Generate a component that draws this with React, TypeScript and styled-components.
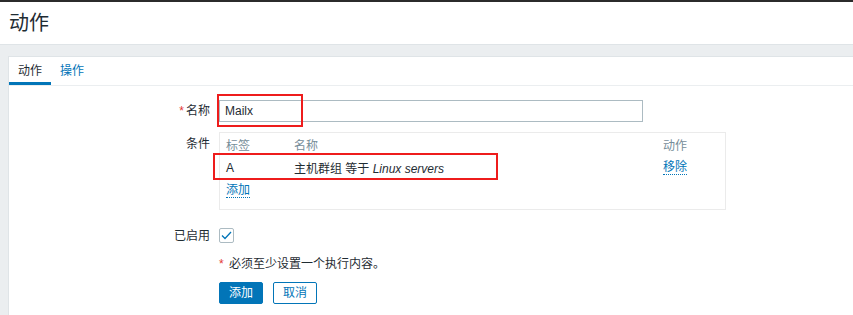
import React from 'react';
import styled, { createGlobalStyle } from 'styled-components';

const GlobalStyle = createGlobalStyle`
  html, body {
    margin: 0;
    padding: 0;
    background: #ebeef0;
  }
  body {
    font-family: "Liberation Sans", Arial, "Noto Sans CJK SC", sans-serif;
    font-size: 12px;
    color: #1f2c33;
  }
`;

const TopStrip = styled.div`
  height: 2px;
  background: #2b2b2b;
`;

const Header = styled.header`
  height: 42px;
  background: #ffffff;
  border-bottom: 1px solid #dfe4e7;
  display: flex;
  align-items: center;
  padding-left: 9px;
`;

const Title = styled.h1`
  margin: 0;
  font-size: 20px;
  font-weight: normal;
  line-height: 24px;
  color: #1f2c33;
`;

const Main = styled.main`
  padding: 11px 0 0 8px;
  height: calc(100vh - 45px);
  box-sizing: border-box;
`;

const Panel = styled.section`
  background: #ffffff;
  border-left: 1px solid #dfe4e7;
  border-top: 1px solid #dfe4e7;
  height: 100%;
`;

const TabBar = styled.nav`
  display: flex;
  border-bottom: 1px solid #ebeef0;
`;

const Tab = styled.div<{ $active?: boolean }>`
  height: 28px;
  box-sizing: border-box;
  padding: 7px 9px 4px;
  line-height: 14px;
  color: ${p => (p.$active ? '#1f2c33' : '#0275b8')};
  border-bottom: 3px solid ${p => (p.$active ? '#0275b8' : 'transparent')};
`;

const Form = styled.div`
  display: grid;
  grid-template-columns: 201px 1fr;
  column-gap: 9px;
  padding: 14px 0 0 0;
`;

const Label = styled.div<{ $top?: number }>`
  text-align: right;
  line-height: 14px;
  padding-top: ${p => p.$top ?? 0}px;
`;

const Required = styled.span`
  color: #e33734;
  margin-right: 2px;
`;

const Field = styled.div<{ $mb?: number }>`
  position: relative;
  margin-bottom: ${p => p.$mb ?? 0}px;
`;

const TextInput = styled.div`
  width: 424px;
  height: 22px;
  box-sizing: border-box;
  border: 1px solid #acbbc2;
  padding: 0 5px;
  line-height: 20px;
  color: #1f2c33;
`;

const Annotation = styled.div<{ $l: number; $t: number; $w: number; $h: number }>`
  position: absolute;
  left: ${p => p.$l}px;
  top: ${p => p.$t}px;
  width: ${p => p.$w}px;
  height: ${p => p.$h}px;
  box-sizing: border-box;
  border: 2px solid #ee1c1c;
  pointer-events: none;
`;

const ConditionBox = styled.div`
  width: 507px;
  box-sizing: border-box;
  border: 1px solid #ebebeb;
  padding: 0 6px 7px;
`;

const CondRow = styled.div`
  display: grid;
  grid-template-columns: 68px 1fr 56px;
  height: 23px;
  align-items: center;
`;

const HeadCell = styled.div`
  color: #768d99;
`;

const Link = styled.span`
  color: #0275b8;
  border-bottom: 1px dotted #0275b8;
  line-height: 13px;
  justify-self: start;
`;

const Em = styled.i`
  font-style: italic;
`;

const Checkbox = styled.div`
  width: 15px;
  height: 15px;
  box-sizing: border-box;
  border: 1px solid #acbbc2;
  border-radius: 2px;
  display: flex;
  align-items: center;
  justify-content: center;
`;

const Note = styled.div`
  line-height: 14px;
`;

const Buttons = styled.div`
  display: flex;
  gap: 10px;
`;

const Button = styled.button<{ $primary?: boolean }>`
  height: 22px;
  box-sizing: border-box;
  padding: 0 9px;
  border-radius: 2px;
  border: 1px solid #0275b8;
  background: ${p => (p.$primary ? '#0275b8' : '#ffffff')};
  color: ${p => (p.$primary ? '#ffffff' : '#0275b8')};
  font-family: inherit;
  font-size: 12px;
  line-height: 20px;
`;

export default function App() {
  return (
    <>
      <GlobalStyle />
      <TopStrip />
      <Header>
        <Title>动作</Title>
      </Header>
      <Main>
        <Panel>
          <TabBar>
            <Tab $active>动作</Tab>
            <Tab>操作</Tab>
          </TabBar>
          <Form>
            <Label $top={4}>
              <Required>*</Required>名称
            </Label>
            <Field $mb={10}>
              <TextInput>Mailx</TextInput>
              <Annotation $l={-2} $t={-6} $w={86} $h={33} />
            </Field>

            <Label $top={5}>条件</Label>
            <Field $mb={18}>
              <ConditionBox>
                <CondRow>
                  <HeadCell>标签</HeadCell>
                  <HeadCell>名称</HeadCell>
                  <HeadCell>动作</HeadCell>
                </CondRow>
                <CondRow>
                  <div>A</div>
                  <div>
                    主机群组 等于 <Em>Linux servers</Em>
                  </div>
                  <Link>移除</Link>
                </CondRow>
                <CondRow>
                  <Link>添加</Link>
                </CondRow>
              </ConditionBox>
              <Annotation $l={-6} $t={21} $w={285} $h={27} />
            </Field>

            <Label $top={1}>已启用</Label>
            <Field $mb={14}>
              <Checkbox>
                <svg width="11" height="9" viewBox="0 0 11 9">
                  <path d="M1 4.5 L4 7.5 L10 1" fill="none" stroke="#0275b8" strokeWidth="1.3" />
                </svg>
              </Checkbox>
            </Field>

            <div />
            <Field $mb={11}>
              <Note>
                <Required>*</Required> 必须至少设置一个执行内容。
              </Note>
            </Field>

            <div />
            <Buttons>
              <Button $primary>添加</Button>
              <Button>取消</Button>
            </Buttons>
          </Form>
        </Panel>
      </Main>
    </>
  );
}
